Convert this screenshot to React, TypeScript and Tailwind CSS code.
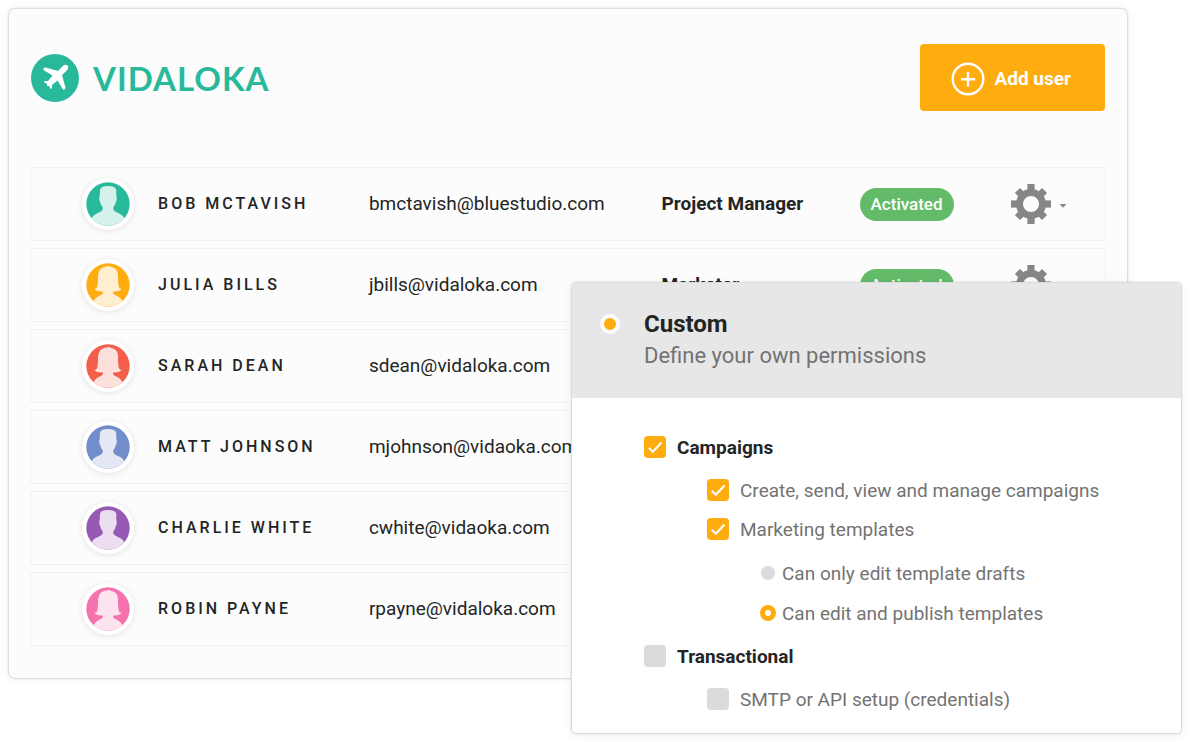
import React from "react";

type Person = {
  name: string;
  email: string;
  role?: string;
  kind: "short" | "long";
  color: string;
  tint: string;
};

const people: Person[] = [
  { name: "Bob McTavish", email: "bmctavish@bluestudio.com", role: "Project Manager", kind: "short", color: "#28b99a", tint: "#d4f1eb" },
  { name: "Julia Bills", email: "jbills@vidaloka.com", role: "Marketer", kind: "long", color: "#ffac0e", tint: "#ffeecf" },
  { name: "Sarah Dean", email: "sdean@vidaloka.com", kind: "long", color: "#f35f4a", tint: "#fddfdb" },
  { name: "Matt Johnson", email: "mjohnson@vidaoka.com", kind: "short", color: "#718dca", tint: "#e3e8f4" },
  { name: "Charlie White", email: "cwhite@vidaoka.com", kind: "short", color: "#9859b5", tint: "#eadef0" },
  { name: "Robin Payne", email: "rpayne@vidaloka.com", kind: "long", color: "#f572ae", tint: "#fde3ef" },
];

const silhouettes = {
  short:
    "M14 8Q14.300 4 22 4Q29.700 4 30.300 8L30.300 14Q31.300 15 30.600 18Q30 20.500 29.500 21Q29 23.500 27.300 25.500L27.300 27.500Q28.500 29.500 32 31Q38 33 38.500 38L34 44H10L5.500 38Q6 33 12 31Q15.500 29.500 16.700 27.500L16.700 25.500Q15 23.500 14.500 21Q14 20.500 13.400 18Q12.700 15 13.700 14Z",
  long:
    "M22 3.200Q24 2.800 25 4Q31.500 4.500 32 12Q32 21 32.800 24Q33.500 26 35.800 26Q33 29 27 28.500L27 30Q28 32 31 32.800Q35 35 37 38.500L34 44H10L7 38.500Q9 35 13 32.800Q16 32 17 30L17 28.500Q11 29 8.200 26Q10.500 26 11.200 24Q12 21 12 12Q13 3.500 22 3.200Z",
};

function Avatar({ person }: { person: Person }) {
  const clip = "clip-" + person.name.replace(" ", "-");
  return (
    <div className="flex size-[52px] items-center justify-center rounded-full bg-white shadow-[0_1px_6px_rgba(0,0,0,0.1)]">
      <svg viewBox="0 0 44 44" className="size-[44px]" aria-hidden="true">
        <defs>
          <clipPath id={clip}>
            <circle cx="22" cy="22" r="21.700" />
          </clipPath>
        </defs>
        <g clipPath={`url(#${clip})`}>
          <rect width="44" height="44" fill={person.color} />
          <path d={silhouettes[person.kind]} fill={person.tint} />
        </g>
      </svg>
    </div>
  );
}

function Gear() {
  return (
    <svg viewBox="-20 -20 40 40" className="size-10" fill="#868686" aria-hidden="true">
      <circle r="11.500" fill="none" stroke="#868686" strokeWidth="7" />
      {[0, 45, 90, 135, 180, 225, 270, 315].map((a) => (
        <rect key={a} x="-3.600" y={a % 90 ? -19.2 : -20} width="7.200" height="7" transform={`rotate(${a})`} />
      ))}
    </svg>
  );
}

function Logo() {
  return (
    <a href="#" className="flex items-center gap-[14px] text-[#28b99a]">
      <svg viewBox="0 0 48 48" className="size-12" aria-hidden="true">
        <circle cx="24" cy="24" r="24" fill="#28b99a" />
        <path
          fill="#fff"
          d="M36.500 11.500C35 10 32.500 11 31 12.700L27 17L14.800 13.600Q13.500 13.300 12.300 14.800Q12 15.600 12.800 16.200L21.500 21.500L17 27L13.800 27L13 28.300L16 30L15.700 31.200L16.800 32.300L18 32L19.700 35L21 34.200L21 31L26.500 26.500L31.800 35.200Q32.400 36 33.200 35.700Q34.700 34.500 34.400 33.200L31 21L35.300 17C37 15.500 38 13 36.500 11.500Z"
        />
      </svg>
      <span className="font-[Lato,sans-serif] text-[33px] leading-10 font-bold tracking-[1px]">VIDALOKA</span>
    </a>
  );
}

function Check({ id, label, checked, strong }: { id: string; label: string; checked?: boolean; strong?: boolean }) {
  return (
    <div className="flex h-6 items-center gap-[11px]">
      <span className="grid size-[22px] shrink-0">
        <input
          id={id}
          type="checkbox"
          defaultChecked={checked}
          className="peer col-start-1 row-start-1 size-[22px] appearance-none rounded-[4px] bg-[#dbdbdb] checked:bg-[#ffac0e]"
        />
        <svg
          viewBox="0 0 22 22"
          className="pointer-events-none invisible col-start-1 row-start-1 size-[22px] peer-checked:visible"
          fill="none"
          stroke="#fff"
          strokeWidth="2"
          aria-hidden="true"
        >
          <path d="M4.800 11.800L8.800 15.800L17.500 6.500" />
        </svg>
      </span>
      <label
        htmlFor={id}
        className={strong ? "pt-0.5 text-[19px] leading-6 font-bold text-[#232525]" : "pt-0.5 text-[19px] leading-6 text-[#737373]"}
      >
        {label}
      </label>
    </div>
  );
}

function Radio({ id, label, checked }: { id: string; label: string; checked?: boolean }) {
  return (
    <div className="flex h-6 items-center gap-[6px]">
      <input
        id={id}
        type="radio"
        name="template-access"
        defaultChecked={checked}
        className="size-4 shrink-0 appearance-none rounded-full border border-white bg-[#dbdbdb] checked:border-5 checked:border-[#ffac0e] checked:bg-white"
      />
      <label htmlFor={id} className="pt-0.5 text-[19px] leading-6 text-[#737373]">
        {label}
      </label>
    </div>
  );
}

function Permissions() {
  return (
    <section className="absolute top-[282px] right-2 w-[611px] overflow-hidden rounded-[5px] border border-[#dcdcdc] bg-white shadow-[0_0_0_1px_rgba(0,0,0,0.03),0_2px_8px_rgba(0,0,0,0.06)]">
      <header className="flex items-start gap-6 bg-[#e7e7e7] pt-[25px] pb-[26px] pl-7">
        <input
          id="custom"
          type="radio"
          name="permission-set"
          defaultChecked
          className="mt-[6px] size-5 shrink-0 appearance-none rounded-full border-4 border-[#fbfbfb] bg-[#fbfbfb] checked:bg-[#ffac0e]"
        />
        <label htmlFor="custom" className="flex flex-col">
          <span className="text-[24px] leading-8 font-bold text-[#232525]">Custom</span>
          <span className="text-[22px] leading-8 text-[#737373]">Define your own permissions</span>
        </label>
      </header>
      <div className="flex flex-col gap-[19px] pt-[37px] pb-[22px] pl-[72px]">
        <Check id="campaigns" label="Campaigns" checked strong />
        <div className="flex flex-col gap-[15px] pl-[63px]">
          <Check id="manage" label="Create, send, view and manage campaigns" checked />
          <Check id="marketing" label="Marketing templates" checked />
          <div className="mt-[5px] flex flex-col gap-4 pl-[53px]">
            <Radio id="drafts" label="Can only edit template drafts" />
            <Radio id="publish" label="Can edit and publish templates" checked />
          </div>
        </div>
        <Check id="transactional" label="Transactional" strong />
        <div className="pl-[63px]">
          <Check id="smtp" label="SMTP or API setup (credentials)" />
        </div>
      </div>
    </section>
  );
}

export default function App() {
  return (
    <div className="relative min-h-screen bg-white p-2 font-[Roboto,sans-serif] text-[#232525]">
      <main className="mr-[54px] rounded-[7px] border border-[#dedede] bg-[#fcfcfc] px-[21px] pt-[35px] pb-[25px] shadow-[0_0_0_1px_rgba(0,0,0,0.03),0_0_4px_4px_rgba(0,0,0,0.02)]">
        <header className="flex items-center justify-between px-px">
          <Logo />
          <button className="flex h-[67px] items-center gap-[9px] rounded-[4px] bg-[#ffac0e] pt-[3px] pr-[34px] pl-[31px] text-[19px] font-bold text-white">
            <svg viewBox="0 0 34 34" className="size-[34px]" fill="none" stroke="#fff" strokeWidth="2.400" aria-hidden="true">
              <circle cx="17" cy="17" r="15.300" />
              <path d="M17 10V24.500M10 17.200H24.300" />
            </svg>
            Add user
          </button>
        </header>
        <table className="mt-[49px] w-full table-fixed border-separate border-spacing-x-0 border-spacing-y-[7px] text-left">
          <colgroup>
            <col className="w-[11.9%]" />
            <col className="w-[19.6%]" />
            <col className="w-[27.2%]" />
            <col className="w-[18.4%]" />
            <col className="w-[14%]" />
            <col className="w-[8.9%]" />
          </colgroup>
          <tbody>
            {people.map((p) => (
              <tr key={p.name} className="h-[74px]">
                <td className="rounded-l-[4px] border-y border-l border-[#f0f0f0] p-0 pl-[51px]">
                  <Avatar person={p} />
                </td>
                <th scope="row" className="border-y border-[#f0f0f0] p-0 text-[16px] font-medium tracking-[3px] whitespace-nowrap uppercase">
                  {p.name}
                </th>
                <td className="border-y border-[#f0f0f0] p-0 text-[19px] whitespace-nowrap">{p.email}</td>
                <td className="border-y border-[#f0f0f0] p-0 text-[19px] font-bold whitespace-nowrap">{p.role}</td>
                <td className="border-y border-[#f0f0f0] p-0">
                  {p.role && (
                    <span className="inline-block rounded-full bg-[#63bb6a] px-[11px] text-[17px] leading-[33px] font-medium text-white">
                      Activated
                    </span>
                  )}
                </td>
                <td className="rounded-r-[4px] border-y border-r border-[#f0f0f0] p-0 pl-px">
                  {p.role && (
                    <button aria-label={`Settings for ${p.name}`} className="flex items-center gap-2">
                      <Gear />
                      <svg viewBox="0 0 8 4" className="mt-1 h-1 w-2" fill="#868686" aria-hidden="true">
                        <path d="M0.500 0H7.500L4 3.700Z" />
                      </svg>
                    </button>
                  )}
                </td>
              </tr>
            ))}
          </tbody>
        </table>
      </main>
      <Permissions />
    </div>
  );
}
